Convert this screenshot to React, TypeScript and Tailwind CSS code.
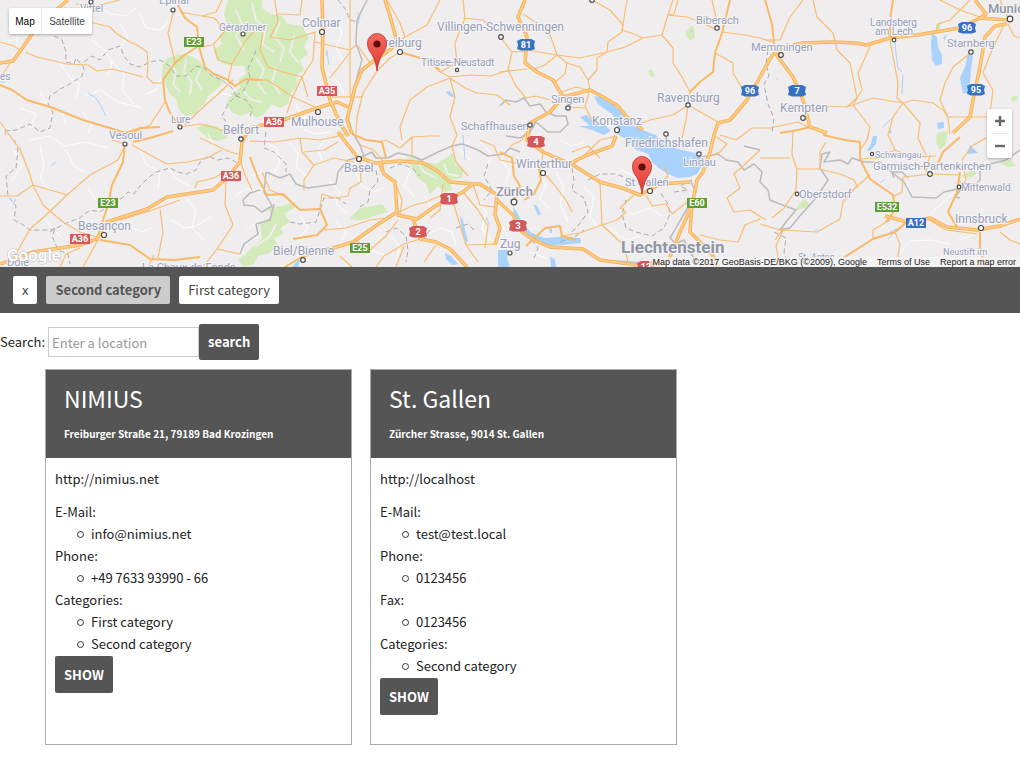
import React from "react";

const forests = [
  "163,64 168,58 180,54 190,56 198,60 204,66 208,72 214,76 224,80 220,86 213,92 208,96 205,104 199,108 196,114 186,116 179,110 176,99 170,94 166,86 162,78",
  "228,0 262,0 262,8 270,14 282,16 288,24 302,26 309,38 304,46 308,54 300,60 304,70 296,76 298,86 291,92 288,104 280,108 272,104 264,114 256,118 250,112 241,116 232,112 226,104 231,94 240,88 238,80 246,74 244,66 234,66 224,64 216,58 214,50 222,44 219,36 228,28 224,14",
  "196,128 206,124 216,126 224,132 228,138 218,141 208,138",
  "406,158 416,156 424,162 436,164 446,158 453,153 455,164 463,170 462,178 450,180 452,190 444,192 438,186 430,194 426,184 416,176 412,166",
  "350,218 360,208 374,206 382,204 388,212 374,216 364,220 352,220",
  "250,250 262,238 260,224 272,216 268,208 282,206 294,202 296,207 284,214 290,222 280,228 284,234 274,238 278,246 268,254 258,256 254,264 244,267 238,260",
  "686,32 691,26 694,27 695,38 690,40 686,36",
  "648,70 652,70 655,76 651,77",
  "936,24 941,22 939,32 936,31",
  "937,133 948,131 946,144 940,150 936,142",
  "1011,97 1018,95 1017,100 1012,102",
  "962,175 970,171 978,172 972,177 963,178",
  "998,162 1010,160 1017,166 1008,167",
  "795,210 800,203 805,199 810,206 802,209",
];

const forestCuts = [
  "170,64 176,72 173,84 180,92", "186,60 184,72 192,82 190,94", "200,70 196,80 202,90", "236,10 242,24 236,36 244,50",
  "252,4 256,20 266,28 262,44 274,52", "280,22 274,36 284,48 280,62", "294,36 290,52 298,62", "256,58 264,70 258,84 266,94",
  "276,68 272,82 280,94", "244,92 252,100 262,102", "256,246 270,236 276,224", "416,160 424,172 436,178", "444,164 448,174 458,176",
];

const lakes = [
  "594,96 600,97 612,104 624,114 634,126 645,131 656,135 668,146 682,150 699,154 702,166 697,174 690,177 678,178 668,174 660,169 652,162 648,154 635,149 626,139 617,134 616,128 618,124 612,114 598,104",
  "580,117 587,115 592,120 603,123 611,131 604,135 592,130 578,126 590,126",
  "513,206 518,214 523,225 532,233 544,238 560,237 580,238 581,243 562,245 547,246 534,241 524,231 514,214",
  "498,250 508,250 507,258 510,267 498,267",
  "533,204 537,206 541,214 538,215", "549,227 552,229 552,233 550,233", "550,256 555,260 556,267 551,267",
  "460,216 463,220 465,230 468,241 466,243 462,232", "445,253 451,256 458,264 452,265 446,259",
  "292,267 297,261 301,259 298,267", "612,260 630,261 650,263 648,266 614,262",
  "932,33 937,37 938,47 942,55 942,64 936,66 932,60 931,44",
  "968,53 973,55 971,70 969,93 963,93 961,84 960,78 965,67",
  "873,136 877,136 876,144 870,151 867,150 871,144",
  "970,145 975,150 978,153 967,154", "937,123 944,122 944,128 938,129", "446,92 450,91 456,98 450,96",
  "943,38 947,34 945,40", "690,31 693,30 691,33", "889,133 890,128 892,133",
];

const streams = [
  "88,93 96,98 102,108 106,116", "895,42 896,55 898,68 902,72", "903,75 902,94", "883,127 892,118", "51,166 56,162",
  "0,82 5,82", "357,12 360,16 358,24", "327,52 329,65", "776,78 779,80", "463,135 465,160", "486,217 490,226", "886,236 890,232 899,228",
  "888,239 896,231", "880,183 885,179", "815,231 818,229", "13,204 16,199", "327,50 326,56",
];

const locals = [
  "92,40 104,50 112,62 108,76", "112,62 124,74 122,90 134,104", "86,96 100,90 118,102 142,108", "40,92 48,106 62,112 66,124",
  "20,108 36,114 30,128", "140,14 146,28 160,30 168,22", "98,6 110,14 126,16 136,8", "30,140 50,136 64,146 86,142 108,148",
  "58,60 70,78 80,84 76,98", "82,112 92,124 88,134", "120,24 128,36 120,48", "8,28 18,36 16,48", "40,146 44,166 40,178 50,190",
  "66,150 74,166 84,172", "88,188 96,200 110,204", "140,150 146,164 160,172 158,188", "168,168 178,180 190,186", "186,198 196,210 192,228 204,240",
  "128,226 142,232 152,228", "172,220 184,228 196,226 212,216", "236,196 246,188 258,192", "40,214 52,228 62,238", "14,150 22,166 12,180",
  "264,140 276,148 280,162 272,176", "290,142 298,154 296,166 308,178", "326,138 318,148 322,160", "250,176 262,172", "330,182 340,192 336,204 348,214",
  "356,172 362,186 374,192 384,188", "402,158 410,172 404,186 414,196", "424,196 432,208", "336,18 342,32 336,48 344,62", "328,74 338,82 344,94",
  "296,104 300,114 310,120", "304,130 316,134 330,132", "258,222 246,230", "300,216 308,228 300,236", "336,222 346,232 340,244",
  "390,236 400,246 396,260", "428,234 440,228 452,232 456,246", "478,200 486,212 482,228 490,240", "500,222 508,236 520,246",
  "536,170 546,184 540,198 550,210", "556,172 564,188 560,204 568,222", "584,186 594,198 590,216 598,228", "560,140 572,146 584,142",
  "612,176 622,170 634,176", "620,210 634,214 650,208 662,216", "610,228 626,240 640,236", "480,142 492,154 488,166", "470,140 460,150 470,160",
  "500,160 510,170 506,182", "216,92 232,96", "208,134 214,146", "146,94 156,90 160,80", "370,250 386,256", "530,252 546,258",
  "900,252 910,241 930,240 950,244", "960,240 974,234", "930,215 945,200 955,192",
];

const dashed = [
  "54,36 62,40 66,52 66,62 74,64 76,58 84,68 82,76 70,84 62,88 50,96 48,104 53,112 50,128 40,132 30,124 16,130 4,131",
  "84,62 92,56 100,60 108,50 120,46 124,56 130,64 140,67 150,62 160,60 170,66 176,76 186,76 196,66 204,68 212,76 222,80 232,88 236,96 228,104 222,116 226,122",
  "236,96 244,90 250,78 248,68 254,56 256,50", "236,96 246,100 252,108 250,118", "14,140 18,150 16,168 6,176 8,196 16,206 14,220 22,224 30,230 50,230 56,228 52,236 58,250 68,254 70,264",
  "50,232 64,224 80,218 90,210 100,212 112,203 122,198 128,192 134,194 140,186 148,178 156,172 170,168 178,172 186,174 196,170 200,162 208,156 218,160 228,158 240,164",
  "266,132 264,148 274,152 280,158 286,164 286,172", "338,0 346,10 350,20 358,22", "768,50 766,64 769,76 764,84 766,94 768,104 774,118 772,132",
  "774,232 786,238 784,252 788,266", "376,170 378,182 370,190 368,202 358,208", "390,168 400,164 412,168 420,176", "290,222 300,224 316,222 320,210 324,198 338,198 346,204",
  "386,232 396,228 406,236 408,250 406,262", "430,230 424,238 436,242", "488,164 484,176 492,190 484,200", "456,228 468,224 476,232",
  "572,168 574,180 572,190 584,198 588,212 578,226 572,232", "588,180 600,174 616,174 632,180", "626,200 622,214 626,228 636,232 652,236 664,228 670,214 668,204 660,192",
  "674,192 688,190 680,186 692,180", "532,240 538,248 534,258", "560,242 576,236 584,230",
];

const borders = [
  "367,0 357,20 356,43 362,60 357,77 353,100 348,117 352,132 360,145 364,156 372,152 376,158 388,158 398,153 412,156 422,160 438,152 452,146 462,144 468,146 478,150 488,156 504,154 510,148 520,152",
  "500,106 506,100 516,102 524,98 530,106 540,104 546,112 556,116 566,116 568,124 560,132 548,132 536,122 530,132 520,138 506,136",
  "364,156 348,160 338,172 336,184 322,186 308,188 296,184 290,174 280,178 266,172",
  "266,172 264,192 272,206 262,212 254,206 244,205 243,200 250,193 260,190", "274,204 270,220 256,224 258,234 244,244 240,254",
  "697,158 708,156 718,154 726,160 738,162 744,170 754,164 762,172 760,182 768,190 770,200 780,204 796,210 786,222 780,230 790,228 798,218 816,198 828,180 820,168 822,154 830,152 824,162 840,160 848,164 852,158 864,162 880,162",
  "690,180 696,192 690,204 684,214 676,228 670,238 676,244 684,240 690,252 696,262",
  "880,162 894,174 904,182 912,197 936,198 944,192 962,188 955,197 960,198", "960,182 974,186 980,180 980,170 990,164 1006,160 1020,150",
  "760,150 744,146", "894,178 892,172 902,172 908,178",
];

const minorRoads = [
  "25,52 37,57 67,64 88,65 97,71 113,69 143,77", "90,22 110,27 117,34 130,42 137,45 147,52 148,62 147,77 153,83 162,83",
  "174,10 168,33 175,62", "180,12 202,16 216,12 222,0", "200,47 213,45 226,30 214,18 202,16", "233,80 216,96 200,110 185,125", "165,102 150,125 127,135",
  "214,46 218,60 232,64 246,40 256,30", "232,64 228,80", "180,127 200,124 216,128 232,134", "0,42 14,46 20,50", "0,78 14,58",
  "76,4 96,6 120,0", "0,122 6,130 5,135", "110,128 112,140 125,144", "263,33 260,50 268,67 283,72 302,77 308,97", "250,80 267,80 283,90 293,97 317,108",
  "275,0 278,22 270,37 290,40 315,32 313,60 302,77 292,98 287,113", "278,14 300,15 302,0", "315,42 350,50 356,45", "330,78 338,68 350,52",
  "350,0 350,97", "358,46 370,63", "377,71 363,93 357,117 356,134", "377,71 390,58 400,52", "332,97 362,97", "440,0 427,25 405,37 397,42", "387,0 400,23 405,37",
  "450,78 427,87 410,100 400,127 402,140", "450,78 455,97 450,117 457,135 452,146", "450,78 465,88 477,93 497,95 510,105", "463,0 465,18 455,43 457,63 440,72",
  "463,18 483,20 495,30 503,32", "427,60 440,72 450,77 470,75 490,76 510,70", "500,37 512,52 508,70 516,86 526,98 536,96 550,100", "512,52 526,51", "500,72 527,69",
  "523,14 535,22 547,27 553,43 557,55 567,63 580,67 588,80 590,90", "527,50 557,55 580,58 607,52 625,47 643,38 662,35 668,15 673,0",
  "557,55 545,65 532,70", "567,63 565,74 555,82", "592,0 610,10 623,25 622,32 608,42 607,52 597,58 597,70 588,80", "627,0 622,30 634,34 643,38",
  "662,35 673,48 673,63 682,77 690,92 688,105", "668,15 687,17 700,22 717,30", "678,0 674,14 668,15", "722,32 745,35 760,38 772,42", "712,0 718,26",
  "715,53 733,63 733,73 742,88", "688,105 720,123", "688,105 673,115 650,120 634,126", "688,105 686,120 682,138", "590,90 585,106 592,120", "568,107 585,108",
  "562,92 576,87 588,90", "803,0 790,17 780,40 765,40", "813,0 817,17 833,33 837,50 850,63 857,98 847,107 825,106 810,110", "870,47 858,73 862,90 853,105 870,127 867,140 860,150",
  "847,107 853,105 873,98 903,103 913,100 933,103 943,110 948,117 990,117", "903,103 920,123 918,138 926,155", "903,103 893,117 888,135 895,150",
  "890,40 898,83 897,98 903,103", "972,52 953,67 945,83 940,100 948,117 950,134", "983,73 993,90 990,113 1000,130", "1003,27 992,50 983,73", "940,0 960,10 980,17", "970,0 950,20 938,24 936,32",
  "1008,24 1014,36 1020,38", "1000,0 1008,18", "7,132 20,149 30,175 33,185 43,205 63,222 80,232 97,237", "33,185 50,190 67,195 90,175 118,160 125,146", "67,195 45,216 30,229 13,259",
  "0,196 17,196 33,185", "132,145 167,164 187,162 207,158 222,150", "160,209 163,232 158,258", "120,220 147,212 180,200", "226,180 225,205 233,225 217,249 203,267",
  "217,249 240,254", "98,240 83,267", "195,188 197,182 214,178 224,172 230,176", "200,138 215,145 230,152 238,154", "240,160 245,175 252,190", "148,267 154,255", "60,267 66,254 80,248",
  "250,141 275,142 300,138 320,140 347,134", "300,138 302,152 314,165 304,180 304,190", "304,152 324,150 338,142", "314,165 334,158 354,162", "360,160 361,182 350,188 348,196 334,198 322,194 320,208",
  "262,172 270,190 284,196 296,207", "322,230 346,228 370,220 384,218", "395,182 402,200 400,214", "384,170 382,160 374,150 360,145", "400,148 412,137 430,136 440,136", "412,137 412,156", "378,142 386,140 400,148", "452,146 456,162 468,176",
  "397,213 414,205 426,202 440,196", "443,184 440,210 430,218", "454,205 460,225 466,245 478,262", "463,192 478,210 488,226 485,248", "420,239 404,244 384,256 376,267", "355,240 370,250 386,236 398,220", "473,184 480,205 494,207",
  "404,246 396,267", "436,245 424,262", "340,256 352,267", "466,245 496,244", "480,140 494,146 500,160 520,164", "530,126 522,140 510,146", "543,152 541,170 552,182 566,200 572,212", "573,165 590,150 600,140 616,136",
  "600,182 602,225 614,236 624,246 628,262", "602,225 617,220 626,212 620,208 634,195", "602,225 580,233 560,236", "646,195 652,206 666,204 672,214 690,200", "600,158 588,146 572,152", "660,184 668,176 664,166",
  "720,135 736,140 752,128 770,128 798,122 810,128", "713,135 727,144 720,152 711,156", "760,150 744,165 734,174 740,188 727,198 734,212 750,210 766,220", "700,235 720,240 738,242 745,225 760,219",
  "760,224 780,230 817,232 840,219 843,202 855,188 870,175", "793,132 792,155 797,169 820,169 820,152 826,142", "797,169 796,190 784,208 772,218", "820,169 840,174 854,180 858,188", "775,240 784,228 776,246 780,267",
  "860,159 876,158 895,150", "903,177 933,174 960,175", "903,177 902,192 894,196", "873,239 873,230 890,220", "895,232 900,244 898,256 904,267", "930,155 926,172", "895,150 912,157 936,156",
  "958,190 966,180 962,160 972,146 986,138 1000,134", "760,158 790,158", "1000,232 1010,240 1020,244", "926,218 946,230 977,234",
];

const mainRoads = [
  "0,85 12,90 27,100 53,108 83,120 110,128 125,133 141,128 160,127", "178,5 185,18 197,27 199,47 205,67 214,74 226,79 235,86 246,79 262,80", "197,47 183,56 175,63 163,80 165,100 170,113 180,127",
  "125,144 123,162 112,185 108,205 100,229 98,237", "133,142 150,138 173,131", "100,240 130,245 150,259 175,260 200,257", "250,157 258,178 267,195 283,194 300,210 320,209 327,225 317,235 293,239",
  "400,52 427,60 440,70", "730,0 722,33 715,53 713,72 700,82 690,92", "893,0 890,20 890,40", "823,135 845,140 860,142 860,159 870,179 893,195 895,210 886,222", "960,172 957,192 948,212 957,227", "980,232 980,248 985,267", "843,258 873,239 895,232 907,222",
  "765,0 772,24 775,53", "960,137 943,152 936,168", "526,246 545,228 560,226 562,236 576,240", "780,133 798,130 810,127", "500,152 512,158 514,176 520,186 514,200", "352,134 366,140 382,142 386,158",
  "317,252 300,258 285,267", "538,164 541,180 534,194 524,200",
];

const motorways = [
  "68,0 50,15 32,34 21,50 13,61 0,63", "322,0 323,30 322,67 330,100 340,123 348,136", "385,0 392,23 397,42 390,50 375,60 362,70 355,87 350,107 347,120 352,134",
  "250,128 283,120 317,108 337,102 348,107", "525,0 518,17 527,37 525,63 537,72 553,80 563,97 550,112 530,123", "563,97 590,90 605,98 618,106 627,117 643,130",
  "773,54 760,77 747,100 730,120 718,123 714,135 710,152 703,172 697,180 692,205 680,232 668,262", "773,54 790,46 803,43 833,42 855,43 867,45 890,38 917,35 960,28 980,18 1007,20", "775,53 793,77 803,100 810,127 827,133",
  "1007,24 995,26 985,37 980,67 973,100 970,117 953,133", "0,264 33,252 80,245 97,239 107,222 147,209 167,197 213,190 228,177 240,162 242,142 250,128",
  "338,132 357,157 375,163 400,161 423,163 436,170 450,182 473,184 480,184 497,195 495,215 500,228 495,245", "380,165 384,174 395,182 397,212 377,225 353,242 333,248 317,252", "397,215 417,219 437,205 463,192 473,184",
  "413,219 420,239 436,242 450,249 467,267", "530,123 527,140 543,152 573,165 600,182 622,188 640,195 660,184 690,182", "497,200 513,215 522,232 534,240 550,247 583,249 600,260 637,265 664,264",
  "692,205 690,232 700,242 712,254 718,267", "885,216 907,222 930,218 947,227 977,230 1000,226 1020,219", "570,163 590,154 612,146 616,136", "975,0 986,14 980,18",
];

type Label = [string, number, number, number, number?];
const labels: Label[] = [
  ["Épinal", 159, 4, 11], ["Vittel", 80, 12, 10], ["Gérardmer", 219, 31, 10], ["Colmar", 302, 27, 12], ["Freiburg", 378, 47, 12],
  ["Villingen-Schwenningen", 437, 31, 12], ["Titisee-Neustadt", 421, 66, 10], ["Biberach", 696, 24, 11], ["Memmingen", 751, 51, 11],
  ["Landsberg", 870, 26, 10], ["am Lech", 875, 35, 10], ["Starnberg", 947, 47, 11], ["Vesoul", 109, 139, 11], ["Lure", 171, 123, 10],
  ["Belfort", 223, 134, 12], ["Mulhouse", 291, 126, 12], ["Schaffhausen", 461, 130, 11], ["Singen", 551, 103, 11], ["Konstanz", 592, 125, 12],
  ["Ravensburg", 657, 102, 12], ["Kempten", 780, 112, 12], ["Basel", 344, 172, 12], ["Winterthur", 516, 168, 12], ["Friedrichshafen", 625, 147, 12],
  ["Lindau", 683, 166, 11], ["St Gallen", 625, 186, 11], ["Besançon", 78, 230, 12], ["Schwangau", 875, 158, 9], ["Garmisch-Partenkirchen", 873, 170, 11],
  ["Mittenwald", 961, 191, 10], ["Oberstdorf", 799, 198, 11], ["Innsbruck", 955, 223, 12], ["Neustift im", 943, 255, 9],
  ["Biel/Bienne", 273, 255, 12], ["Zug", 500, 248, 12], ["Dole", 7, 266, 11], ["La Chaux-de-Fonds", 142, 271, 11], ["es", 0, 80, 10], ["St. Anton", 798, 260, 9],
  ["Munich", 988, 13, 13, 500], ["Zürich", 496, 196, 13, 500], ["Liechtenstein", 621, 253, 17, 700],
];

const cities: [number, number, number][] = [
  [91, 2, 2], [173, 10, 2], [243, 34, 2], [180, 127, 2], [125, 144, 2], [322, 32, 2.5], [318, 112, 2.5], [400, 52, 2.5], [457, 70, 1.6], [501, 37, 2.3],
  [592, 0, 2.3], [717, 28, 2.2], [568, 108, 2.2], [530, 125, 2.2], [617, 130, 2.5], [688, 105, 2.2], [781, 55, 2.3], [894, 40, 1.8], [971, 52, 2.2],
  [1010, 19, 2.8], [803, 118, 2.3], [359, 159, 2.5], [543, 173, 2.5], [514, 202, 2.8], [666, 134, 2.2], [699, 154, 2.2], [650, 191, 2.5], [241, 139, 2.2],
  [104, 235, 2.5], [303, 260, 2.3], [510, 253, 2], [872, 154, 1.6], [797, 194, 1.8], [930, 174, 2.3], [959, 187, 1.8], [981, 228, 2.5],
];

type Shield = [string, number, number, "e" | "a" | "ch" | "de" | "at"];
const shields: Shield[] = [
  ["E23", 194, 42, "e"], ["A35", 327, 91, "a"], ["A36", 274, 122, "a"], ["A36", 231, 176, "a"], ["E23", 108, 203, "e"], ["A36", 80, 239, "a"],
  ["1", 449, 199, "ch"], ["2", 418, 232, "ch"], ["E25", 360, 248, "e"], ["4", 536, 142, "ch"], ["3", 518, 226, "ch"], ["81", 526, 45, "de"],
  ["96", 750, 91, "de"], ["7", 797, 91, "de"], ["96", 967, 28, "de"], ["95", 976, 90, "de"], ["E60", 697, 203, "e"], ["E532", 887, 207, "e"],
  ["A12", 916, 223, "at"], ["13", 646, 267, "ch"],
];
const shieldFill = { e: "#5d9e33", a: "#d9575b", ch: "#d4575b", de: "#3672c4", at: "#3672c4" };

function ShieldMark({ shield: [text, x, y, kind] }: { shield: Shield }) {
  const w = text.length > 3 ? 24 : kind === "ch" || kind === "de" ? 18 : 20;
  const l = x - w / 2;
  const r = x + w / 2;
  return (
    <g>
      {kind === "ch" || kind === "de" ? (
        <path d={`M${l} ${y - 4}L${l + 4} ${y - 6}H${r - 4}L${r} ${y - 4}L${r - 1} ${y}L${r} ${y + 4}L${r - 4} ${y + 5.5}H${l + 4}L${l} ${y + 4}L${l + 1} ${y}Z`} fill={shieldFill[kind]} />
      ) : (
        <rect x={l} y={y - 5} width={w} height={10} fill={shieldFill[kind]} />
      )}
      <text x={x} y={y + 3} textAnchor="middle" className="fill-white font-['Roboto',sans-serif] text-[9px] font-bold">{text}</text>
    </g>
  );
}

function Pin({ x, y }: { x: number; y: number }) {
  return (
    <g transform={`translate(${x} ${y})`}>
      <path d="M0 0C-1-8-3-13-6-18C-8.500-21-9.500-24-9.500-28A9.500 9.500 0 0 1 9.500-28C9.500-24 8.500-21 6-18C3-13 1-8 0 0Z" fill="url(#pin)" stroke="#b8302a" strokeWidth="0.8" />
      <circle cy="-27" r="3.600" fill="#5f0d0a" />
    </g>
  );
}

function Lines({ items }: { items: string[] }) {
  return <>{items.map((points, i) => <polyline key={i} points={points} />)}</>;
}

function MapDrawing() {
  return (
    <svg viewBox="0 0 1020 267" preserveAspectRatio="xMidYMid slice" className="block h-full w-full font-['Roboto',sans-serif]" role="img" aria-label="Map">
      <defs>
        <linearGradient id="pin" x1="0" y1="0" x2="0" y2="1">
          <stop offset="0" stopColor="#f8685d" />
          <stop offset="1" stopColor="#dc3a30" />
        </linearGradient>
      </defs>
      <rect width="1020" height="267" fill="#f0edee" />
      <g fill="#d3eabb">{forests.map((p, i) => <polygon key={i} points={p} />)}</g>
      <g fill="none" strokeLinejoin="round" strokeLinecap="round">
        <g stroke="#f0edee" strokeWidth="1.800"><Lines items={forestCuts} /></g>
        <g stroke="#ffffff" strokeWidth="0.900"><Lines items={locals} /></g>
      </g>
      <g fill="#a9d2fc">{lakes.map((p, i) => <polygon key={i} points={p} />)}</g>
      <g fill="none" strokeLinejoin="round">
        <g stroke="#a9d2fc" strokeWidth="1"><Lines items={streams} /></g>
        <g stroke="#acaaaa" strokeWidth="1" strokeDasharray="5 3"><Lines items={dashed} /></g>
        <g stroke="#bcbaba" strokeWidth="1.500"><Lines items={borders} /></g>
        <g stroke="#f9bd72" strokeWidth="1.200"><Lines items={minorRoads} /></g>
        <g stroke="#f9b966" strokeWidth="2"><Lines items={mainRoads} /></g>
        <g stroke="#f6ae55" strokeWidth="3.500"><Lines items={motorways} /></g>
        <g stroke="#fecb80" strokeWidth="1.900"><Lines items={motorways} /></g>
      </g>
      {labels.map(([text, x, y, size, weight]) => (
        <text key={text} x={x} y={y} fontSize={size} fontWeight={weight ?? 400} fill={weight ? "#8f96a8" : "#959eb8"} stroke="#f6f4f5" strokeWidth="2" strokeLinejoin="round" paintOrder="stroke">{text}</text>
      ))}
      {cities.map(([x, y, r]) => <circle key={`${x}-${y}`} cx={x} cy={y} r={r} fill="#fff" stroke="#4b4b4b" strokeWidth="1.200" />)}
      {shields.map((s, i) => <ShieldMark key={i} shield={s} />)}
      <Pin x={377} y={71} />
      <Pin x={642} y={194} />
    </svg>
  );
}

function MapPanel() {
  return (
    <section className="relative h-[267px] overflow-hidden font-['Liberation_Sans',sans-serif]">
      <MapDrawing />
      <div className="absolute left-[9px] top-2 flex h-[26px] rounded-xs bg-white text-[10px] shadow-[0_1px_3px_rgba(0,0,0,0.3)]">
        <button className="w-[33px] border-r border-[#e6e6e6] text-black">Map</button>
        <button className="w-[50px] text-[#444]">Satellite</button>
      </div>
      <div className="absolute right-2 top-[109px] flex w-[25px] flex-col items-center rounded-xs bg-white shadow-[0_1px_3px_rgba(0,0,0,0.3)]">
        <button aria-label="Zoom in" className="flex h-6 w-full items-center justify-center">
          <svg viewBox="0 0 10 10" className="size-[10px]"><path d="M5 0V10M0 5H10" stroke="#666" strokeWidth="2.400" /></svg>
        </button>
        <div className="h-px w-[17px] bg-[#e6e6e6]" />
        <button aria-label="Zoom out" className="flex h-6 w-full items-center justify-center">
          <svg viewBox="0 0 10 10" className="size-[10px]"><path d="M0 5H10" stroke="#666" strokeWidth="2.400" /></svg>
        </button>
      </div>
      <svg className="absolute bottom-0 left-1 h-6 w-16" viewBox="0 0 64 24" aria-label="Google">
        <text x="3" y="18" fontSize="17" fontWeight="500" fill="#fff" stroke="#bbb" strokeWidth="1" paintOrder="stroke" className="font-['Roboto',sans-serif]">Google</text>
      </svg>
      <div className="absolute bottom-0 right-0 flex h-[10px] items-center gap-[10px] bg-[#f5f5f5]/70 px-1 text-[9px] leading-[10px] text-[#222]">
        <span>Map data ©2017 GeoBasis-DE/BKG (©2009), Google</span>
        <a href="#terms">Terms of Use</a>
        <a href="#report">Report a map error</a>
      </div>
    </section>
  );
}

type Place = { name: string; address: string; url: string; groups: { label: string; items: string[] }[] };

const places: Place[] = [
  {
    name: "NIMIUS", address: "Freiburger Straße 21, 79189 Bad Krozingen", url: "http://nimius.net",
    groups: [
      { label: "E-Mail:", items: ["info@nimius.net"] },
      { label: "Phone:", items: ["+49 7633 93990 - 66"] },
      { label: "Categories:", items: ["First category", "Second category"] },
    ],
  },
  {
    name: "St. Gallen", address: "Zürcher Strasse, 9014 St. Gallen", url: "http://localhost",
    groups: [
      { label: "E-Mail:", items: ["test@test.local"] },
      { label: "Phone:", items: ["0123456"] },
      { label: "Fax:", items: ["0123456"] },
      { label: "Categories:", items: ["Second category"] },
    ],
  },
];

function PlaceCard({ place }: { place: Place }) {
  return (
    <article className="min-h-[376px] w-[307px] border border-[#aaa]">
      <header className="h-[88px] bg-[#555] px-[18px] pt-3 text-white">
        <h2 className="text-[23px] font-normal leading-8">{place.name}</h2>
        <p className="mt-3 text-[10px] font-bold leading-4">{place.address}</p>
      </header>
      <div className="px-[9px] pt-[10px] leading-[22px]">
        <p className="mb-[11px]"><a href={place.url}>{place.url}</a></p>
        {place.groups.map((group) => (
          <div key={group.label}>
            <div>{group.label}</div>
            <ul className="pl-[22px]">
              {group.items.map((item) => (
                <li key={item} className="flex items-center gap-[7px] before:size-[7px] before:rounded-full before:border before:border-[#333]">{item}</li>
              ))}
            </ul>
          </div>
        ))}
        <button className="mt-px h-[37px] rounded-xs bg-[#555] px-[9px] font-bold text-white">SHOW</button>
      </div>
    </article>
  );
}

export default function App() {
  return (
    <main className="min-h-screen bg-white font-['Noto_Sans_CJK_SC',sans-serif] text-[13px] text-[#222]">
      <MapPanel />
      <nav className="flex gap-[9px] bg-[#555] px-[13px] py-[9px] leading-7 text-[#444]">
        <button className="rounded-xs bg-white px-[9px]">x</button>
        <button className="rounded-xs bg-[#ccc] px-[9px] font-bold text-[#555]">Second category</button>
        <button className="rounded-xs bg-white px-[9px]">First category</button>
      </nav>
      <form className="mt-[11px] flex h-9 items-center" onSubmit={(e) => e.preventDefault()}>
        <label htmlFor="location" className="mr-[3px]">Search:</label>
        <input id="location" type="text" placeholder="Enter a location" className="h-[30px] w-[151px] border border-[#ccc] px-[3px] placeholder:text-[#999]" />
        <button className="h-9 rounded-xs bg-[#555] px-[9px] font-bold text-white">search</button>
      </form>
      <section className="mt-[9px] flex flex-wrap gap-[18px] pb-[30px] pl-[45px]">
        {places.map((place) => <PlaceCard key={place.name} place={place} />)}
      </section>
    </main>
  );
}
